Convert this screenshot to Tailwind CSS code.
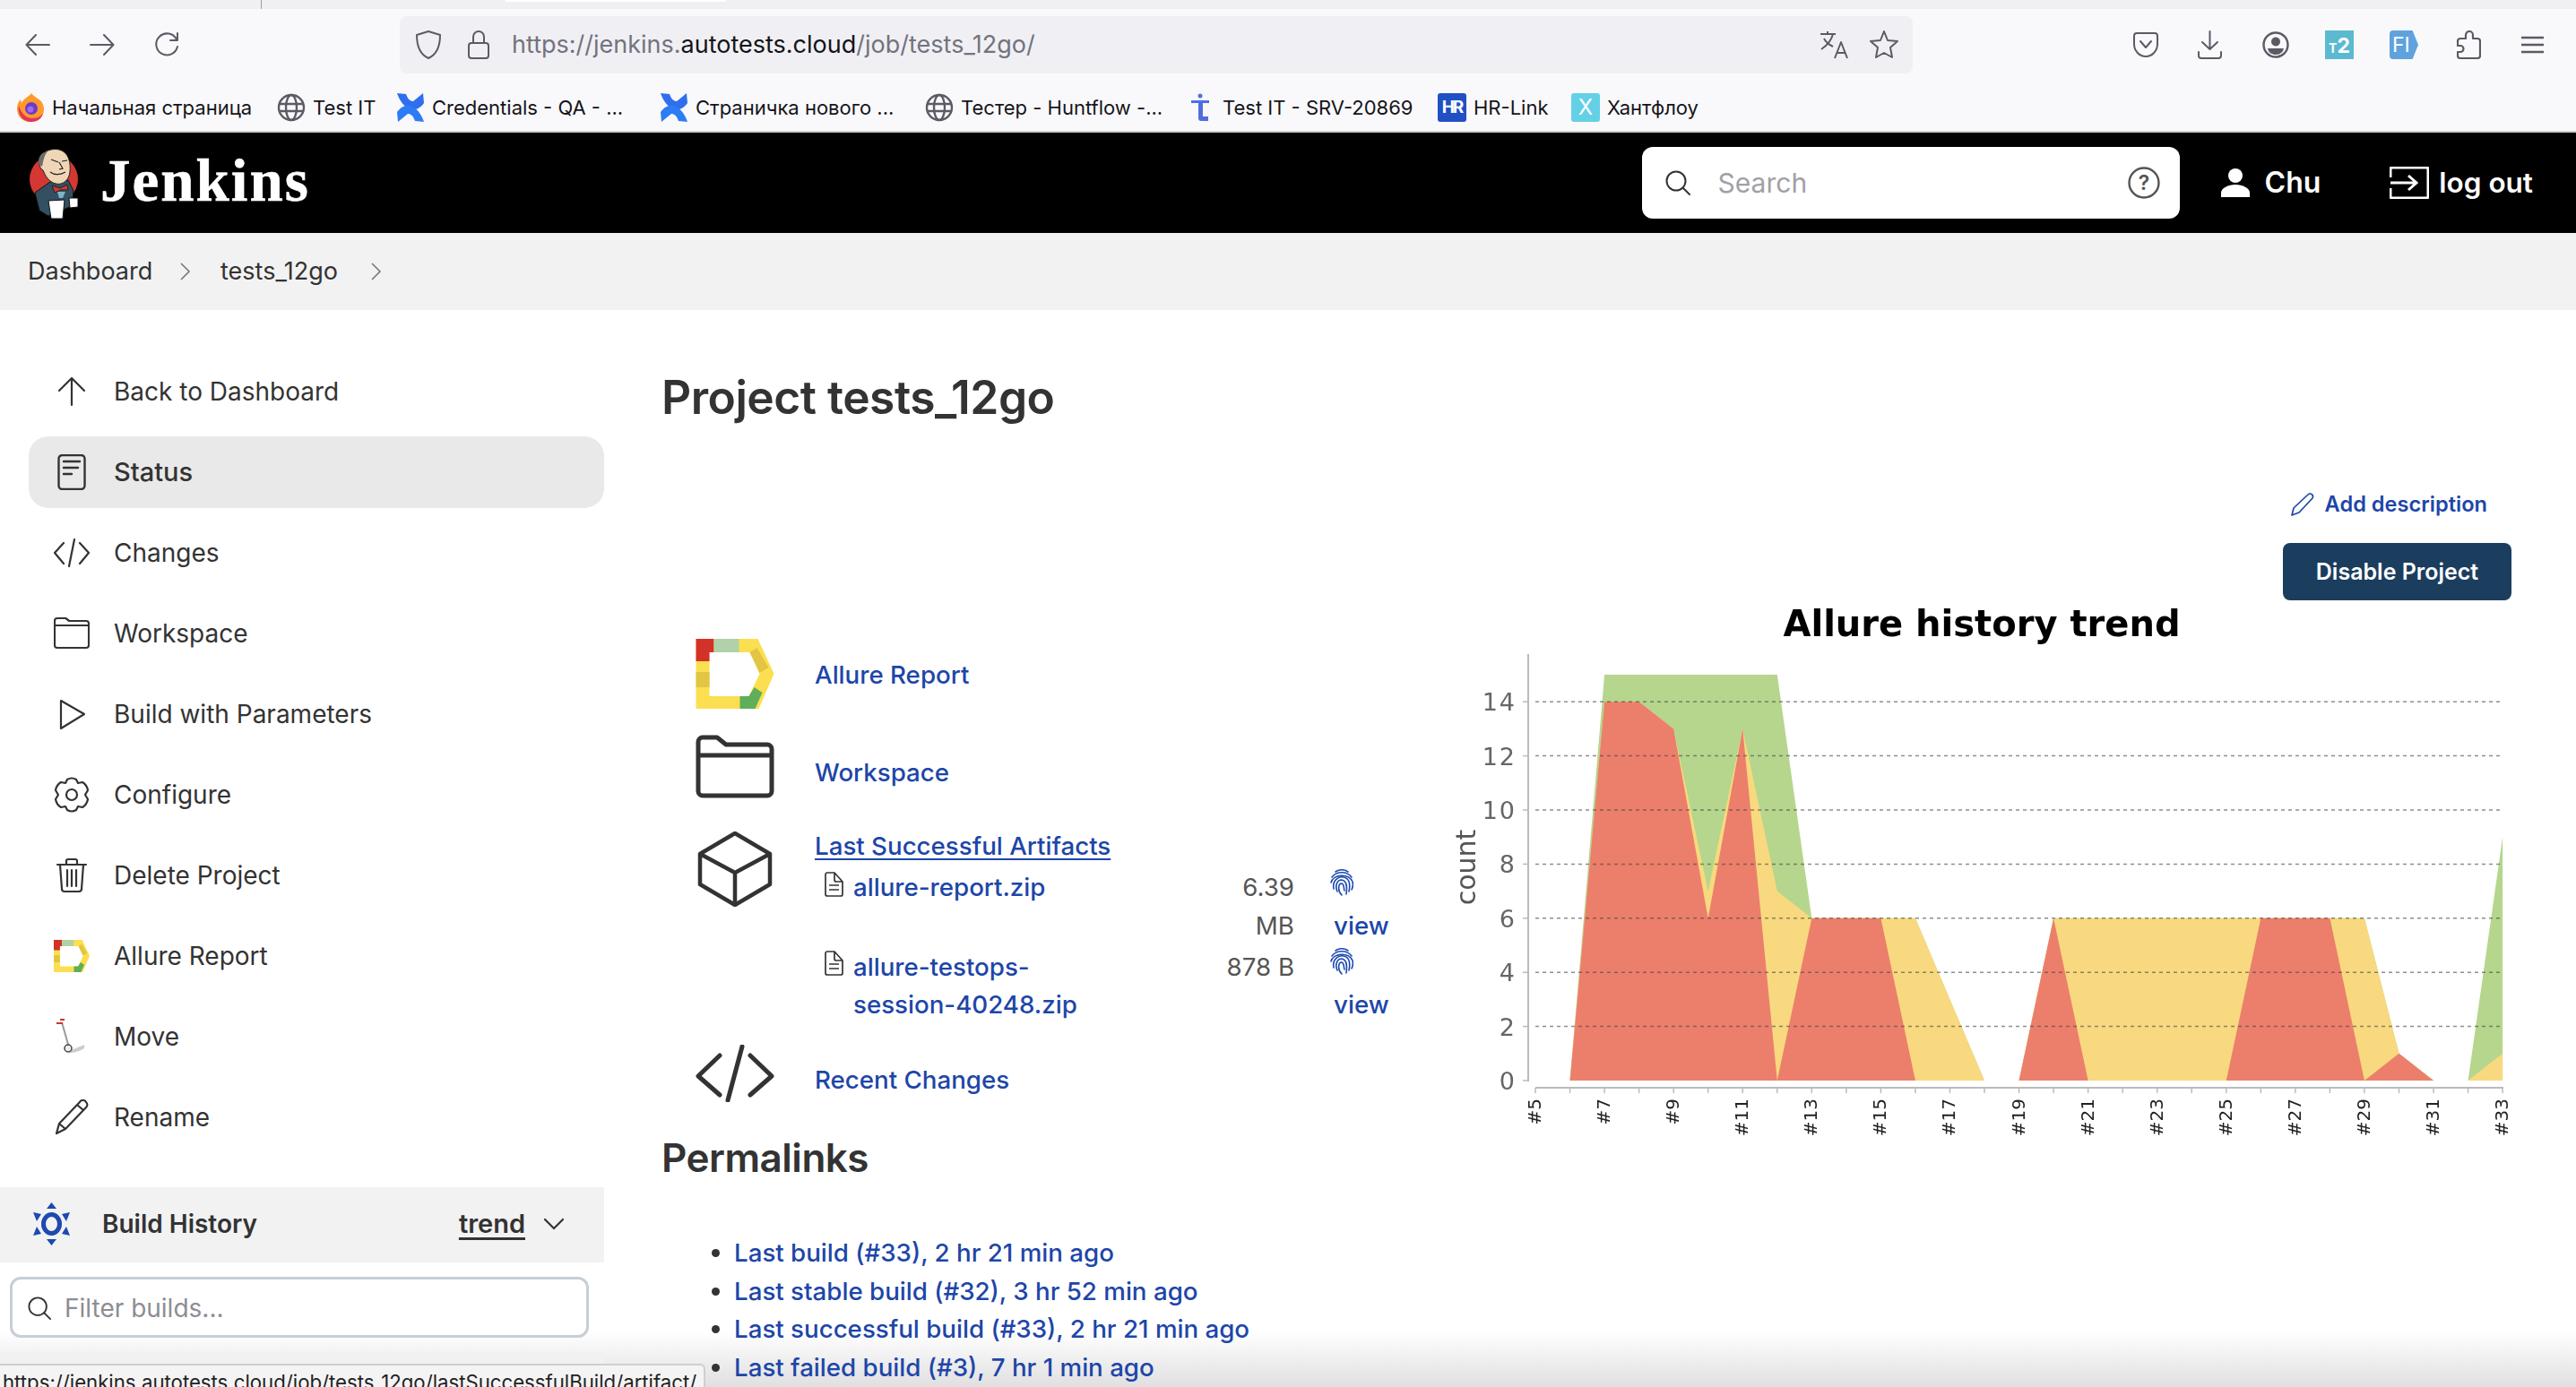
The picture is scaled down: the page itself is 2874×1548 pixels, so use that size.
<!DOCTYPE html>
<html lang="en">
<head>
    <meta charset="UTF-8">
    <title>tests_12go [Jenkins]</title>
    <script src="https://cdn.jsdelivr.net/npm/@tailwindcss/browser@4"></script>
</head>
<body class="bg-white font-['Inter','Liberation_Sans',sans-serif] text-[#333]">
<svg class="hidden">
    <symbol id="allure" viewBox="0 0 87 78">
        <path fill="#fbdf50" fill-rule="evenodd" d="M0 0H69L87 39L70 78H0ZM15 15V64H59L71 39L60 15Z"/>
        <path fill="#d33228" d="M0 0H20V15H15V25H0Z"/>
        <path fill="#b1d1a9" d="M20 0H48V15H20Z"/>
        <path fill="#e2c543" d="M60 15L68 10L81 32L71 38ZM0 37H15V54H0Z"/>
        <path fill="#5fae59" d="M49 78V64H59L65 54L74 60L66 78Z"/>
    </symbol>
    <symbol id="globe" viewBox="0 0 32 32">
        <g fill="none" stroke="#5b5b66" stroke-width="2.4"><circle cx="16" cy="16" r="14"/><ellipse cx="16" cy="16" rx="6" ry="14"/><path d="M2 12H30M2 20H30"/></g>
    </symbol>
    <symbol id="confluence" viewBox="0 0 32 32">
        <path fill="#2f6fed" d="M1 0L11 1C13 7 16 9 19 9L30 0L31 11C27 17 20 20 15 18C9 15 4 9 1 0Z"/>
        <path fill="#2b7cf5" d="M31 32L21 31C19 25 16 23 13 23L2 32L1 21C5 15 12 12 17 14C23 17 28 23 31 32Z"/>
    </symbol>
    <symbol id="doc" viewBox="0 0 21 28">
        <path fill="none" stroke="#333" stroke-width="1.7" stroke-linejoin="round" d="M3 1H11L20 11V25a2 2 0 0 1-2 2H3a2 2 0 0 1-2-2V3a2 2 0 0 1 2-2ZM11 1V9a2 2 0 0 0 2 2H20M5 15H16M5 20H16"/>
    </symbol>
    <symbol id="print" viewBox="0 0 26 30">
        <g fill="none" stroke="#1d4ab0" stroke-width="1.6" stroke-linecap="round">
            <path d="M6 3C10 0 16 0 20 3"/>
            <path d="M2 9C7 2 19 2 24 9"/>
            <path d="M1 15C3 6 20 4 25 14C26 18 25 21 24 23"/>
            <path d="M4 22C2 12 10 8 15 9C21 10 23 16 21 25"/>
            <path d="M8 25C5 18 8 12 13 12C19 13 19 20 18 28"/>
            <path d="M13 29C8 24 9 16 13 16C16 17 15 22 16 24"/>
        </g>
    </symbol>
    <symbol id="search" viewBox="0 0 28 28">
        <circle cx="12" cy="12" r="10.5" fill="none" stroke="#333" stroke-width="2"/><path d="M20 20L27 27" stroke="#333" stroke-width="2" stroke-linecap="round"/>
    </symbol>
</svg>

<div class="relative h-[1548px] overflow-hidden">
    <!-- bottom fade sits behind the page content -->
    <div class="pointer-events-none absolute inset-x-0 bottom-0 h-[62px] bg-linear-to-b from-[#ffffff00] to-[#e0e0e0]"></div>

    <!-- browser chrome -->
    <div class="relative h-[10px] bg-[#f0f0f4]">
        <div class="absolute left-[291px] top-0 h-[10px] w-px bg-[#9a9aa0]"></div>
        <div class="absolute left-[564px] top-0 h-[2px] w-[246px] bg-white"></div>
    </div>
    <div class="relative flex h-[80px] items-center bg-[#f9f9fb] pl-[28px]">
        <svg class="w-[28px] h-[24px]" viewBox="0 0 28 24" fill="none" stroke="#5b5b66" stroke-width="2" stroke-linecap="round" stroke-linejoin="round"><path d="M27 12H2M12 1L1.5 12L12 23"/></svg>
        <svg class="ml-[44px] w-[28px] h-[24px]" viewBox="0 0 28 24" fill="none" stroke="#5b5b66" stroke-width="2" stroke-linecap="round" stroke-linejoin="round"><path d="M1 12H26M16 1L26.5 12L16 23"/></svg>
        <svg class="ml-[44px] w-[28px] h-[28px]" viewBox="0 0 28 28" fill="none" stroke="#5b5b66" stroke-width="2" stroke-linecap="round" stroke-linejoin="round"><path d="M25 8A12 12 0 1 0 26 16M26 1V9H18"/></svg>
        <div class="ml-[246px] flex h-[64px] w-[1688px] items-center rounded-[8px] bg-[#f0f0f4] pl-[18px] pr-[16px]">
            <svg class="w-[28px] h-[32px]" viewBox="0 0 28 32" fill="none" stroke="#5b5b66" stroke-width="2" stroke-linejoin="round"><path d="M14 1L27 5C27 18 23 27 14 31C5 27 1 18 1 5Z"/></svg>
            <svg class="ml-[30px] w-[24px] h-[32px]" viewBox="0 0 24 32" fill="none" stroke="#5b5b66" stroke-width="2"><rect x="1" y="14" width="22" height="17" rx="3"/><path d="M6 14V7a6 6 0 0 1 12 0V14"/></svg>
            <span class="ml-[25px] whitespace-nowrap text-[27px] text-[#73737e]">https://jenkins.<span class="text-[#15141a]">autotests.cloud</span>/job/tests_12go/</span>
            <svg class="ml-auto w-[32px] h-[32px]" viewBox="0 0 32 32" fill="none" stroke="#5b5b66" stroke-width="2" stroke-linejoin="round"><path d="M1 4H18M9 1V4M15 4C13 12 8 17 2 21M5 9C7 13 11 16 15 18M17 31L24 13L31 31M19 25H29"/></svg>
            <svg class="ml-[24px] w-[32px] h-[32px]" viewBox="0 0 32 32" fill="none" stroke="#5b5b66" stroke-width="2" stroke-linejoin="round"><path d="M16 1L20 11L31 12L23 19L25 30L16 25L7 30L9 19L1 12L12 11Z"/></svg>
        </div>
        <svg class="ml-[246px] w-[28px] h-[28px]" viewBox="0 0 28 28" fill="none" stroke="#5b5b66" stroke-width="2" stroke-linejoin="round" stroke-linecap="round"><path d="M4 1H24a3 3 0 0 1 3 3V13C27 21 21 27 14 27C7 27 1 21 1 13V4a3 3 0 0 1 3-3ZM8 10L14 17L20 10"/></svg>
        <svg class="ml-[44px] w-[27px] h-[32px]" viewBox="0 0 27 32" fill="none" stroke="#5b5b66" stroke-width="2" stroke-linejoin="round" stroke-linecap="round"><path d="M13.5 1V21M5 13L13.5 21L22 13M1 24V28a3 3 0 0 0 3 3H23a3 3 0 0 0 3-3V24"/></svg>
        <svg class="ml-[45px] w-[30px] h-[30px]" viewBox="0 0 30 30"><circle cx="15" cy="15" r="13.5" fill="none" stroke="#5b5b66" stroke-width="2.4"/><circle cx="15" cy="11.5" r="5" fill="#5b5b66"/><path fill="#5b5b66" d="M6 19H24C23 24 19 26 15 26C11 26 7 24 6 19Z"/></svg>
        <div class="ml-[40px] flex h-[32px] w-[32px] items-end justify-center bg-[#5bbad0] pb-[5px] font-bold leading-none text-white"><span class="text-[14px]">T</span><span class="text-[23px] leading-[20px]">2</span></div>
        <div class="ml-[40px] flex h-[32px] w-[32px] items-center rounded-l-[4px] bg-[#5fa2dd] pl-[3px] text-[23px] leading-none text-white [clip-path:polygon(0_0,80%_0,100%_50%,80%_100%,0_100%)]">FI</div>
        <svg class="ml-[43px] w-[27px] h-[32px]" viewBox="0 0 27 32" fill="none" stroke="#5b5b66" stroke-width="2.2" stroke-linejoin="round"><path d="M10 7V5a4 4 0 0 1 8 0V9H23a3 3 0 0 1 3 3V28a3 3 0 0 1-3 3H4a3 3 0 0 1-3-3V24H4a3 3 0 0 0 0-7H1V12a3 3 0 0 1 3-3H10Z"/></svg>
        <svg class="ml-[45px] w-[25px] h-[20px]" viewBox="0 0 25 20" stroke="#5b5b66" stroke-width="2.4"><path d="M0 2H25M0 10H25M0 18H25"/></svg>
    </div>
    <div class="relative box-content flex h-[52px] items-center border-b-2 border-[#cfcfd1] bg-[#f9f9fb] pl-[18px] pt-[4px] text-[22px] text-[#15141a]">
        <div class="flex w-[291px] items-center gap-[8px] whitespace-nowrap">
            <svg class="w-[32px] h-[32px]" viewBox="0 0 32 32"><path fill="#ff9a2e" d="M16 32C7 32 1 26 1 17C1 12 3 9 5 7L6 11C8 6 13 5 17 0C19 3 25 6 28 9C30 12 31 15 31 18C31 26 25 32 16 32Z"/><path fill="#e3345c" d="M3 14C1 24 8 32 17 32C24 32 29 28 30 22C27 28 19 29 13 27C8 25 5 20 3 14Z"/><circle cx="17" cy="17" r="7" fill="#6d3cc5"/><circle cx="16" cy="18" r="3.5" fill="#9d6af0"/></svg>
            <span>Начальная страница</span>
        </div>
        <div class="flex w-[133px] items-center gap-[8px] whitespace-nowrap"><svg class="w-[32px] h-[32px]"><use href="#globe"/></svg><span>Test IT</span></div>
        <div class="flex w-[294px] items-center gap-[8px] whitespace-nowrap"><svg class="w-[32px] h-[32px]"><use href="#confluence"/></svg><span>Credentials - QA - ...</span></div>
        <div class="flex w-[296px] items-center gap-[8px] whitespace-nowrap"><svg class="w-[32px] h-[32px]"><use href="#confluence"/></svg><span>Страничка нового ...</span></div>
        <div class="flex w-[296px] items-center gap-[8px] whitespace-nowrap"><svg class="w-[32px] h-[32px]"><use href="#globe"/></svg><span>Тестер - Huntflow -...</span></div>
        <div class="flex w-[276px] items-center gap-[14px] whitespace-nowrap">
            <svg class="w-[22px] h-[32px]" viewBox="0 0 22 32" fill="#4f6fe0"><circle cx="11" cy="3" r="2.5"/><path d="M1 8H21V11H14V26H20V31H12C10 31 9 30 9 28V11H1Z"/></svg>
            <span>Test IT - SRV-20869</span>
        </div>
        <div class="flex w-[149px] items-center gap-[8px] whitespace-nowrap">
            <div class="flex h-[32px] w-[32px] items-center justify-center rounded-[3px] bg-[#2150c4] text-[19px] font-bold tracking-[-2px] text-white">HR</div>
            <span>HR-Link</span>
        </div>
        <div class="flex items-center gap-[8px] whitespace-nowrap">
            <div class="flex h-[32px] w-[32px] items-center justify-center rounded-[3px] bg-[#63d0e6] text-[24px] text-white">X</div>
            <span>Хантфлоу</span>
        </div>
    </div>

    <!-- jenkins header -->
    <header class="relative flex h-[112px] items-center bg-black pl-[20px] pr-[48px] text-white">
        <svg class="w-[90px] h-[95px]" viewBox="0 0 90 95">
            <circle cx="40" cy="43" r="27" fill="#d33833"/>
            <path fill="#335061" stroke="#111" d="M19 58L36 46L56 44L62 56L60 73L34 84L24 78Z"/>
            <path fill="#f0d6b7" stroke="#222" d="M25 20C26 12 38 8 46 10C57 13 59 25 58 35C57 44 50 50 42 48C34 46 30 38 28 33C24 31 23 25 25 20Z"/>
            <path fill="#6d6b6d" d="M24 27C21 19 26 13 33 12C29 17 28 24 27 29Z"/>
            <path fill="none" stroke="#222" stroke-width="1.2" d="M37 21L45 24M49 23L55 22M36 35C41 39 48 38 53 35M46 24L50 31L46 32"/>
            <path fill="#d33833" stroke="#222" d="M38 50L47 53L55 49L56 55L48 55L41 58Z"/>
            <path fill="#7fb3c9" d="M44 57H53L50 64H46Z"/>
            <path fill="#fff" stroke="#111" d="M34 67L52 66L50 87L37 87Z"/>
            <path fill="#fff" stroke="#111" d="M57 64L67 64L67 74L58 75Z"/>
        </svg>
        <div class="mb-[5px] ml-[2px] font-['Liberation_Serif',serif] text-[67px] font-bold leading-none tracking-[2px] [-webkit-text-stroke:0.6px_white]">Jenkins</div>
        <div class="ml-auto flex h-[80px] w-[600px] items-center rounded-[12px] bg-white pl-[26px] pr-[22px]">
            <svg class="w-[28px] h-[28px]"><use href="#search"/></svg>
            <span class="ml-[31px] text-[30px] text-[#a0a0a6]">Search</span>
            <svg class="ml-auto w-[36px] h-[36px]" viewBox="0 0 36 36"><circle cx="18" cy="18" r="16.5" fill="none" stroke="#555" stroke-width="2.4"/><text x="18" y="26" text-anchor="middle" font-size="23" font-weight="600" fill="#555" font-family="Inter">?</text></svg>
        </div>
        <svg class="ml-[46px] w-[32px] h-[32px]" viewBox="0 0 32 32" fill="#fff"><circle cx="16" cy="8" r="8"/><path d="M0 32V27C0 22 8 18 16 18C24 18 32 22 32 27V32Z"/></svg>
        <span class="ml-[17px] text-[32px] font-semibold">Chu</span>
        <svg class="ml-[77px] w-[44px] h-[36px]" viewBox="0 0 44 36" fill="none" stroke="#fff" stroke-width="3"><path d="M1 12V3a2 2 0 0 1 2-2H41a2 2 0 0 1 2 2V33a2 2 0 0 1-2 2H3a2 2 0 0 1-2-2V24M1 18H29M21 10L30 18L21 26"/></svg>
        <span class="ml-[11px] text-[31.500px] font-semibold">log out</span>
    </header>

    <!-- breadcrumb -->
    <nav class="relative flex h-[86px] items-center bg-[#f2f2f2] pl-[31px] text-[27px] text-[#333]">
        <span class="w-[136px] whitespace-nowrap">Dashboard</span>
        <svg class="ml-[33px] w-[13px] h-[20px]" viewBox="0 0 13 20" fill="none" stroke="#777" stroke-width="1.6"><path d="M2 1L11 10L2 19"/></svg>
        <span class="ml-[33px] w-[135px] whitespace-nowrap">tests_12go</span>
        <svg class="ml-[32px] w-[13px] h-[20px]" viewBox="0 0 13 20" fill="none" stroke="#777" stroke-width="1.6"><path d="M2 1L11 10L2 19"/></svg>
    </nav>

    <div class="relative z-10 flex">
        <!-- side panel -->
        <aside class="w-[674px] shrink-0 pt-[51px]">
            <div class="ml-[32px] flex flex-col gap-[10px] text-[28px]">
                <a class="flex h-[80px] items-center gap-[27px] pl-[28px]"><svg class="w-[40px] h-[40px]" viewBox="0 0 40 40" fill="none" stroke="#333" stroke-width="2.2" stroke-linecap="round" stroke-linejoin="round"><path d="M20 35V5M6 19L20 5L34 19"/></svg>Back to Dashboard</a>
                <a class="flex h-[80px] items-center gap-[27px] rounded-[22px] bg-[#e9e9e9] pl-[28px] text-[29px] font-medium"><svg class="w-[40px] h-[40px]" viewBox="0 0 40 40" fill="none" stroke="#333" stroke-width="2.4" stroke-linecap="round" stroke-linejoin="round"><rect x="5.5" y="1" width="29" height="38" rx="4"/><path d="M11 8H29M11 15H27M11 22H20"/></svg>Status</a>
                <a class="flex h-[80px] items-center gap-[27px] pl-[28px]"><svg class="w-[40px] h-[40px]" viewBox="0 0 40 40" fill="none" stroke="#333" stroke-width="2.2" stroke-linecap="round" stroke-linejoin="round"><path d="M11 9L1 20L11 32M29 9L39 20L29 32M23 5L17 35"/></svg>Changes</a>
                <a class="flex h-[80px] items-center gap-[27px] pl-[28px]"><svg class="w-[40px] h-[40px]" viewBox="0 0 40 40" fill="none" stroke="#333" stroke-width="2.2" stroke-linejoin="round"><path d="M0 6a3 3 0 0 1 3-3H13L17 6H37a3 3 0 0 1 3 3V33a3 3 0 0 1-3 3H3a3 3 0 0 1-3-3ZM0 11H40" transform="translate(1 0) scale(.95 1)"/></svg>Workspace</a>
                <a class="flex h-[80px] items-center gap-[27px] pl-[28px]"><svg class="w-[40px] h-[40px]" viewBox="0 0 40 40" fill="none" stroke="#333" stroke-width="2.2" stroke-linejoin="round"><path d="M8 5L34 20L8 36Z"/></svg>Build with Parameters</a>
                <a class="flex h-[80px] items-center gap-[27px] pl-[28px]"><svg class="w-[40px] h-[40px]" viewBox="0 0 40 40" fill="none" stroke="#333" stroke-width="2.2" stroke-linejoin="round"><path d="M15 3Q20 0 25 3L27 7L32 6Q37 9 38 15L35 20L38 25Q37 31 32 34L27 33L25 37Q20 40 15 37L13 33L8 34Q3 31 2 25L5 20L2 15Q3 9 8 6L13 7Z"/><circle cx="20" cy="20" r="6"/></svg>Configure</a>
                <a class="flex h-[80px] items-center gap-[27px] pl-[28px]"><svg class="w-[40px] h-[40px]" viewBox="0 0 40 40" fill="none" stroke="#333" stroke-width="2.2" stroke-linecap="round" stroke-linejoin="round"><path d="M4 8H36M14 8V4a2 2 0 0 1 2-2H24a2 2 0 0 1 2 2V8M7 8L9 35a3 3 0 0 0 3 3H28a3 3 0 0 0 3-3L33 8M15 14V32M20 14V32M25 14V32"/></svg>Delete Project</a>
                <a class="flex h-[80px] items-center gap-[27px] pl-[28px]"><svg class="w-[40px] h-[40px]"><use href="#allure"/></svg>Allure Report</a>
                <a class="flex h-[80px] items-center gap-[27px] pl-[28px]"><svg class="w-[40px] h-[40px]" viewBox="0 0 40 40"><path stroke="#999" stroke-width="2" fill="none" d="M9 4L17 32"/><path stroke="#c33" stroke-width="2" d="M3 5H10M7 1H12"/><path fill="#ccc" d="M17 36L34 29V33C28 37 22 38 17 38Z"/><circle cx="16" cy="33" r="4" fill="#eee" stroke="#444" stroke-width="1.5"/></svg>Move</a>
                <a class="flex h-[80px] items-center gap-[27px] pl-[28px]"><svg class="w-[40px] h-[40px]" viewBox="0 0 40 40" fill="none" stroke="#333" stroke-width="2.2" stroke-linejoin="round"><path d="M3 38L6 27L29 3a4 4 0 0 1 7 0a4 4 0 0 1 0 6L13 33ZM6 27L13 33M26 6L33 12"/></svg>Rename</a>
            </div>
            <div class="mt-[38px] flex h-[84px] items-center bg-[#f2f2f3] pb-[2px] pl-[37px] pr-[45px]">
                <svg class="w-[41px] h-[48px]" viewBox="0 0 41 48" fill="#1d4ab0"><ellipse cx="20.5" cy="24" rx="9" ry="10.5" fill="none" stroke="#1d4ab0" stroke-width="5"/><path d="M20.5 0L26 7H15ZM20.5 48L15 41H26ZM0 11L9 13L4 21ZM41 11L37 21L32 13ZM0 37L4 27L9 35ZM41 37L32 35L37 27Z"/></svg>
                <span class="ml-[36px] text-[28px] font-semibold">Build History</span>
                <span class="ml-auto text-[29px] font-semibold underline underline-offset-[5px] decoration-[3px]">trend</span>
                <svg class="ml-[21px] w-[22px] h-[14px]" viewBox="0 0 22 14" fill="none" stroke="#333" stroke-width="2.2" stroke-linecap="round"><path d="M1 2L11 12L21 2"/></svg>
            </div>
            <div class="ml-[11px] mt-[16px] flex h-[68px] w-[646px] items-center rounded-[12px] border-[3.5px] border-[#c6ced7] bg-white pl-[17px] pt-[2px]">
                <svg class="w-[26px] h-[28px]"><use href="#search"/></svg>
                <span class="ml-[15px] text-[28px] text-[#8d8d92]">Filter builds...</span>
            </div>
            <div class="mt-[16px] h-[60px] bg-[#f1f1f1]"></div>
        </aside>

        <!-- main panel -->
        <main class="min-w-0 flex-1 pl-[64px] pr-[72px] pt-[67px]">
            <h1 class="h-[60px] whitespace-nowrap text-[51.500px] font-semibold leading-[60px] tracking-[-0.5px]">Project tests_12go</h1>
            <div class="flex flex-col items-end">
                <a class="mr-[27px] mt-[70px] flex h-[40px] items-center gap-[12px] text-[23.600px] font-semibold text-[#1d46a8]">
                    <svg class="w-[26px] h-[26px]" viewBox="0 0 26 26" fill="none" stroke="#1d46a8" stroke-width="1.7" stroke-linejoin="round"><path d="M1 25L3 17L19 2a3 3 0 0 1 4.500 0a3 3 0 0 1 0 4.500L9 22Z"/></svg>
                    Add description
                </a>
                <button class="mt-[23px] h-[64px] w-[255px] rounded-[8px] bg-[#1b3d5e] pt-[2px] text-[25px] font-semibold text-white">Disable Project</button>
            </div>
            <div class="flex">
                <div class="w-[862px] shrink-0 pt-[43px] text-[27.700px] font-medium text-[#1d46a8]">
                    <div class="pl-[38px]">
                        <div class="flex h-[78px] items-center gap-[45px]">
                            <svg class="w-[88px] h-[78px]"><use href="#allure"/></svg>
                            <a class="pt-[3px]">Allure Report</a>
                        </div>
                        <div class="mt-[29px] flex h-[71px] gap-[45px]">
                            <svg class="w-[88px] h-[71px]" viewBox="0 0 88 71" fill="none" stroke="#333" stroke-width="5" stroke-linejoin="round"><path d="M3 8a5 5 0 0 1 5-5H24L34 11H80a5 5 0 0 1 5 5V63a5 5 0 0 1-5 5H8a5 5 0 0 1-5-5ZM3 23H85"/></svg>
                            <a class="pt-[22px] leading-[40px]">Workspace</a>
                        </div>
                        <div class="mt-[37px] flex gap-[45px]">
                            <svg class="w-[88px] h-[84px] shrink-0" viewBox="0 0 88 84" fill="none" stroke="#333" stroke-width="4.500" stroke-linejoin="round"><path d="M44 2L83 25V59L44 82L5 59V25ZM5 25L44 46L83 25M44 46V82"/></svg>
                            <div>
                                <a class="block leading-[32px] underline underline-offset-[4px] decoration-2">Last Successful Artifacts</a>
                                <div class="mt-[8.500px] flex flex-col gap-[3px]">
                                    <div class="flex leading-[43px]">
                                        <svg class="ml-[11px] mt-[4px] w-[21px] h-[28px] shrink-0"><use href="#doc"/></svg>
                                        <a class="ml-[11px] w-[260px] shrink-0">allure-report.zip</a>
                                        <span class="ml-[152px] w-[80px] shrink-0 text-right font-normal text-[#555]">6.39 MB</span>
                                        <div class="ml-[40px]">
                                            <svg class="mt-[1px] h-[42px] w-[26px] block" viewBox="0 0 26 42"><use href="#print" width="26" height="30"/></svg>
                                            <a class="ml-[4px] block">view</a>
                                        </div>
                                    </div>
                                    <div class="flex leading-[42px]">
                                        <svg class="ml-[11px] mt-[3px] w-[21px] h-[28px] shrink-0"><use href="#doc"/></svg>
                                        <a class="ml-[11px] w-[260px] shrink-0">allure-testops-session-40248.zip</a>
                                        <span class="ml-[152px] w-[80px] shrink-0 text-right font-normal text-[#555]">878 B</span>
                                        <div class="ml-[40px]">
                                            <svg class="h-[42px] w-[26px] block" viewBox="0 0 26 42"><use href="#print" width="26" height="30"/></svg>
                                            <a class="ml-[4px] block">view</a>
                                        </div>
                                    </div>
                                </div>
                            </div>
                        </div>
                        <div class="mt-[24.500px] flex h-[64px] gap-[45px]">
                            <svg class="w-[88px] h-[64px]" viewBox="0 0 88 64" fill="none" stroke="#333" stroke-width="5" stroke-linecap="round" stroke-linejoin="round"><path d="M27 12L3 35L27 56M61 12L85 35L61 56M52 2L36 62"/></svg>
                            <a class="pt-[19px] leading-[40px]">Recent Changes</a>
                        </div>
                    </div>
                    <h2 class="mt-[31.500px] h-[60px] text-[44px] font-semibold leading-[60px] tracking-[-0.5px] text-[#333]">Permalinks</h2>
                    <ul class="mt-[55.500px] list-disc pl-[81px] leading-[42.700px] marker:text-[#333]">
                        <li>Last build (#33), 2 hr 21 min ago</li>
                        <li>Last stable build (#32), 3 hr 52 min ago</li>
                        <li>Last successful build (#33), 2 hr 21 min ago</li>
                        <li>Last failed build (#3), 7 hr 1 min ago</li>
                    </ul>
                </div>
                <svg id="chart" class="h-[640px] w-[1250px] shrink-0 blur-[0.6px]" viewBox="0 0 1250 640" font-family="DejaVu Sans"></svg>
            </div>
        </main>
    </div>

    <!-- status tooltip -->
    <div class="absolute bottom-[-6px] left-0 z-20 h-[32px] w-[787px] overflow-hidden whitespace-nowrap rounded-tr-[6px] border-r-2 border-t-2 border-[#cfcfcf] bg-[#f4f4f4] pl-[3px] text-[22.200px] leading-[38px] text-[#222]">https://jenkins.autotests.cloud/job/tests_12go/lastSuccessfulBuild/artifact/</div>
</div>

<script>
    // chart data, builds #5 to #33, values are stacked
    const red = [0,0,14,14,13,6,13,0,6,6,6,0,0,0,0,6,0,0,0,0,0,6,6,6,0,1,0,0,0];
    const yellow = [0,0,14,14,13,7,13,7,6,6,6,6,3,0,0,6,6,6,6,6,6,6,6,6,6,1,0,0,1];
    const green = [0,0,15,15,15,15,15,15,6,6,6,6,3,0,0,6,6,6,6,6,6,6,6,6,6,1,0,0,9];

    const chart = document.getElementById("chart");
    const xOf = i => 113 + 38.54 * i;
    const yOf = v => 536 - 30.2 * v;

    function add(tag, attrs, text) {
        const el = document.createElementNS("http://www.w3.org/2000/svg", tag);
        for (const k in attrs) el.setAttribute(k, attrs[k]);
        if (text) el.textContent = text;
        chart.appendChild(el);
    }

    add("text", { x: 611, y: 40, "text-anchor": "middle", "font-size": 40, "font-weight": 700, fill: "#000" }, "Allure history trend");

    [[green, "#b5d68c"], [yellow, "#f8d97f"], [red, "#ec7f6b"]].forEach(([data, color]) => {
        const pts = data.map((v, i) => xOf(i) + "," + yOf(v));
        pts.push(xOf(28) + "," + yOf(0), xOf(0) + "," + yOf(0));
        add("polygon", { points: pts.join(" "), fill: color });
    });

    for (let v = 0; v <= 14; v += 2) {
        if (v > 0) add("line", { x1: 113, x2: 1192, y1: yOf(v), y2: yOf(v), stroke: "#444", "stroke-opacity": 0.6, "stroke-width": 1.5, "stroke-dasharray": "4 4" });
        add("line", { x1: 99, x2: 105, y1: yOf(v), y2: yOf(v), stroke: "#bbb", "stroke-width": 1.5 });
        add("text", { x: 92, y: yOf(v) + 10, "text-anchor": "end", "font-size": 27, "letter-spacing": 2, fill: "#666" }, String(v));
    }
    add("line", { x1: 105, x2: 105, y1: 60, y2: 537, stroke: "#bbb", "stroke-width": 2 });
    add("line", { x1: 113, x2: 1193, y1: 544, y2: 544, stroke: "#bbb", "stroke-width": 2 });

    for (let i = 0; i < 29; i++) {
        add("line", { x1: xOf(i), x2: xOf(i), y1: 544, y2: 550, stroke: "#bbb", "stroke-width": 1.5 });
        if (i % 2 === 0) {
            const x = xOf(i) + 6;
            add("text", { x: x, y: 556, transform: "rotate(-90 " + x + " 556)", "text-anchor": "end", "font-size": 20, fill: "#222" }, "#" + (i + 5));
        }
    }
    add("text", { x: 46, y: 298, transform: "rotate(-90 46 298)", "text-anchor": "middle", "font-size": 30, fill: "#555" }, "count");
</script>
</body>
</html>
